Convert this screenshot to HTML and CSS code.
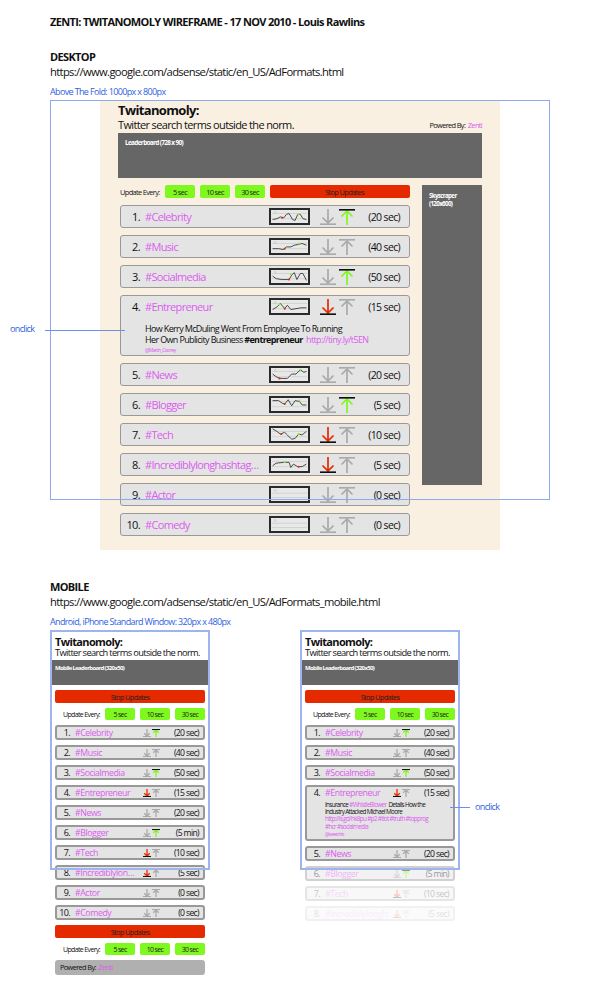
FILE: index.html
```html
<!DOCTYPE html>
<html lang="en">
<head>
  <meta charset="UTF-8">
  <title>Twitanomoly Wireframe</title>
  <link rel="stylesheet" href="styles.css">
</head>
<body>

  <svg class="defs" width="0" height="0">
    <symbol id="down" viewBox="0 0 16 16">
      <path class="shaft" d="M8 0V14M2.5 8.5L8 14L13.5 8.5"/>
      <path class="base" d="M0 15.2H16"/>
    </symbol>
    <symbol id="up" viewBox="0 0 16 16">
      <path class="shaft" d="M8 16V2M2.5 7.5L8 2L13.5 7.5"/>
      <path class="base" d="M0 .8H16"/>
    </symbol>
  </svg>

  <h1 class="doc-title">ZENTI: TWITANOMOLY WIREFRAME - 17 NOV 2010 - Louis Rawlins</h1>

  <h2 class="sec-title">DESKTOP</h2>
  <p class="sec-url">https://www.google.com/adsense/static/en_US/AdFormats.html</p>
  <p class="sec-note">Above The Fold: 1000px x 800px</p>

  <section class="desktop">
    <div class="panel">
      <div class="head">
        <div>
          <div class="brand">Twitanomoly:</div>
          <div class="tagline">Twitter search terms outside the norm.</div>
        </div>
        <div class="powered">Powered By: &nbsp;<span class="pink">Zenti</span></div>
      </div>
      <div class="leaderboard">Leaderboard (728 x 90)</div>

      <div class="columns">
        <div class="main">
          <div class="controls">
            <span class="every">Update Every:</span>
            <span class="pill">5 sec</span>
            <span class="pill">10 sec</span>
            <span class="pill">30 sec</span>
            <span class="stop">Stop Updates</span>
          </div>

          <div class="row">
            <div class="row-top">
              <span class="num">1.</span><span class="tag">#Celebrity</span>
              <svg class="spark" viewBox="1 1 39 15"><path class="grid" d="M0 5H41M0 11H41"/><text class="lbl" x="2" y="6">15</text><path class="line" d="M1 12L6 11L10 9L14 10L17 6L20 5L24 12L27 13L30 6L33 6L36 11L40 12"/><circle class="lo" cx="12" cy="10" r="1.2"/><circle class="hi" cx="31" cy="6" r="1.2"/></svg>
              <svg class="arrow"><use href="#down"/></svg><svg class="arrow green"><use href="#up"/></svg>
              <span class="time">(20 sec)</span>
            </div>
          </div>
          <div class="row">
            <div class="row-top">
              <span class="num">2.</span><span class="tag">#Music</span>
              <svg class="spark" viewBox="1 1 39 15"><path class="grid" d="M0 5H41M0 11H41"/><text class="lbl" x="2" y="6">15</text><path class="line" d="M1 11L8 11L13 12L17 9L22 9L26 7L31 6L35 5L40 7"/><circle class="lo" cx="15" cy="11" r="1.2"/><circle class="hi" cx="32" cy="5" r="1.2"/></svg>
              <svg class="arrow"><use href="#down"/></svg><svg class="arrow"><use href="#up"/></svg>
              <span class="time">(40 sec)</span>
            </div>
          </div>
          <div class="row">
            <div class="row-top">
              <span class="num">3.</span><span class="tag">#Socialmedia</span>
              <svg class="spark" viewBox="1 1 39 15"><path class="grid" d="M0 5H41M0 11H41"/><text class="lbl" x="2" y="6">15</text><path class="line" d="M1 8L5 11L12 12L20 12L23 7L26 4L29 12L33 5L36 5L40 13"/><circle class="lo" cx="20" cy="12" r="1.2"/><circle class="hi" cx="22" cy="6" r="1.2"/></svg>
              <svg class="arrow"><use href="#down"/></svg><svg class="arrow green"><use href="#up"/></svg>
              <span class="time">(50 sec)</span>
            </div>
          </div>
          <div class="row">
            <div class="row-top">
              <span class="num">4.</span><span class="tag">#Entrepreneur</span>
              <svg class="spark" viewBox="1 1 39 15"><path class="grid" d="M0 5H41M0 11H41"/><text class="lbl" x="2" y="6">15</text><path class="line" d="M1 12L6 9L10 5L15 11L18 7L22 12L28 11L34 10L40 10"/><circle class="lo" cx="15" cy="11" r="1.2"/><circle class="hi" cx="9" cy="6" r="1.2"/></svg>
              <svg class="arrow red"><use href="#down"/></svg><svg class="arrow"><use href="#up"/></svg>
              <span class="time">(15 sec)</span>
            </div>
            <div class="detail">
              <p>How Kerry McDuling Went From Employee To Running<br>Her Own Publicity Business <b>#entrepreneur</b> &nbsp;<span class="pink">http://tiny.ly/t5EN</span></p>
              <p class="by pink">@Martin_Cooney</p>
            </div>
          </div>
          <div class="row">
            <div class="row-top">
              <span class="num">5.</span><span class="tag">#News</span>
              <svg class="spark" viewBox="1 1 39 15"><path class="grid" d="M0 5H41M0 11H41"/><text class="lbl" x="2" y="6">15</text><path class="line" d="M1 8L5 11L9 13L18 13L23 8L28 8L33 3L37 6L40 5"/><circle class="lo" cx="9" cy="13" r="1.2"/><circle class="hi" cx="33" cy="3" r="1.2"/></svg>
              <svg class="arrow"><use href="#down"/></svg><svg class="arrow"><use href="#up"/></svg>
              <span class="time">(20 sec)</span>
            </div>
          </div>
          <div class="row">
            <div class="row-top">
              <span class="num">6.</span><span class="tag">#Blogger</span>
              <svg class="spark" viewBox="1 1 39 15"><path class="grid" d="M0 5H41M0 11H41"/><path class="line" d="M1 4L8 4L12 7L15 8L19 3L23 10L27 4L32 5L35 9L40 9"/><circle class="lo" cx="15" cy="8" r="1.2"/><circle class="hi" cx="32" cy="4" r="1.2"/></svg>
              <svg class="arrow"><use href="#down"/></svg><svg class="arrow green"><use href="#up"/></svg>
              <span class="time">(5 sec)</span>
            </div>
          </div>
          <div class="row">
            <div class="row-top">
              <span class="num">7.</span><span class="tag">#Tech</span>
              <svg class="spark" viewBox="1 1 39 15"><path class="grid" d="M0 5H41M0 11H41"/><path class="line" d="M1 2L6 5L10 8L15 6L18 9L23 14L27 13L31 8L35 9L40 5"/><circle class="lo" cx="11" cy="8" r="1.2"/><circle class="hi" cx="31" cy="8" r="1.2"/></svg>
              <svg class="arrow red"><use href="#down"/></svg><svg class="arrow"><use href="#up"/></svg>
              <span class="time">(10 sec)</span>
            </div>
          </div>
          <div class="row">
            <div class="row-top">
              <span class="num">8.</span><span class="tag">#Incrediblylonghashtag…</span>
              <svg class="spark" viewBox="1 1 39 15"><path class="grid" d="M0 5H41M0 11H41"/><path class="line" d="M1 10L5 7L14 6L20 6L22 12L25 8L30 11L35 11L40 8"/><circle class="lo" cx="31" cy="11" r="1.2"/><circle class="hi" cx="15" cy="6" r="1.2"/></svg>
              <svg class="arrow red"><use href="#down"/></svg><svg class="arrow"><use href="#up"/></svg>
              <span class="time">(5 sec)</span>
            </div>
          </div>
          <div class="row">
            <div class="row-top">
              <span class="num">9.</span><span class="tag">#Actor</span>
              <svg class="spark" viewBox="1 1 39 15"><path class="grid" d="M0 7H41M0 12H41"/><text class="lbl" x="2" y="6">15</text></svg>
              <svg class="arrow"><use href="#down"/></svg><svg class="arrow"><use href="#up"/></svg>
              <span class="time">(0 sec)</span>
            </div>
          </div>
          <div class="row">
            <div class="row-top">
              <span class="num">10.</span><span class="tag">#Comedy</span>
              <svg class="spark" viewBox="1 1 39 15"><path class="grid" d="M0 7H41M0 12H41"/><text class="lbl" x="2" y="6">15</text></svg>
              <svg class="arrow"><use href="#down"/></svg><svg class="arrow"><use href="#up"/></svg>
              <span class="time">(0 sec)</span>
            </div>
          </div>
        </div>

        <div class="skyscraper">Skyscraper<br>(120x600)</div>
      </div>
    </div>

    <div class="fold"></div>
    <span class="onclick-label">onclick</span>
    <span class="onclick-line"></span>
  </section>

  <h2 class="sec-title mobile-title">MOBILE</h2>
  <p class="sec-url">https://www.google.com/adsense/static/en_US/AdFormats_mobile.html</p>
  <p class="sec-note">Android, iPhone Standard Window: 320px x 480px</p>

  <section class="phones">
    <div class="phone">
      <div class="m-brand">Twitanomoly:</div>
      <div class="m-tagline">Twitter search terms outside the norm.</div>
      <div class="m-board">Mobile Leaderboard (320x50)</div>
      <div class="m-stop">Stop Updates</div>
      <div class="m-controls">
        <span class="m-every">Update Every:</span>
        <span class="m-pill">5 sec</span><span class="m-pill">10 sec</span><span class="m-pill">30 sec</span>
      </div>

      <div class="m-row"><div class="m-top"><span class="m-num">1.</span><span class="m-tag">#Celebrity</span><svg class="m-arrow"><use href="#down"/></svg><svg class="m-arrow green"><use href="#up"/></svg><span class="m-time">(20 sec)</span></div></div>
      <div class="m-row"><div class="m-top"><span class="m-num">2.</span><span class="m-tag">#Music</span><svg class="m-arrow"><use href="#down"/></svg><svg class="m-arrow"><use href="#up"/></svg><span class="m-time">(40 sec)</span></div></div>
      <div class="m-row"><div class="m-top"><span class="m-num">3.</span><span class="m-tag">#Socialmedia</span><svg class="m-arrow"><use href="#down"/></svg><svg class="m-arrow green"><use href="#up"/></svg><span class="m-time">(50 sec)</span></div></div>
      <div class="m-row"><div class="m-top"><span class="m-num">4.</span><span class="m-tag">#Entrepreneur</span><svg class="m-arrow red"><use href="#down"/></svg><svg class="m-arrow"><use href="#up"/></svg><span class="m-time">(15 sec)</span></div></div>
      <div class="m-row"><div class="m-top"><span class="m-num">5.</span><span class="m-tag">#News</span><svg class="m-arrow"><use href="#down"/></svg><svg class="m-arrow"><use href="#up"/></svg><span class="m-time">(20 sec)</span></div></div>
      <div class="m-row"><div class="m-top"><span class="m-num">6.</span><span class="m-tag">#Blogger</span><svg class="m-arrow"><use href="#down"/></svg><svg class="m-arrow green"><use href="#up"/></svg><span class="m-time">(5 min)</span></div></div>
      <div class="m-row"><div class="m-top"><span class="m-num">7.</span><span class="m-tag">#Tech</span><svg class="m-arrow red"><use href="#down"/></svg><svg class="m-arrow"><use href="#up"/></svg><span class="m-time">(10 sec)</span></div></div>
      <div class="m-row"><div class="m-top"><span class="m-num">8.</span><span class="m-tag">#Incrediblylon…</span><svg class="m-arrow red"><use href="#down"/></svg><svg class="m-arrow"><use href="#up"/></svg><span class="m-time">(5 sec)</span></div></div>
      <div class="m-row"><div class="m-top"><span class="m-num">9.</span><span class="m-tag">#Actor</span><svg class="m-arrow"><use href="#down"/></svg><svg class="m-arrow"><use href="#up"/></svg><span class="m-time">(0 sec)</span></div></div>
      <div class="m-row"><div class="m-top"><span class="m-num">10.</span><span class="m-tag">#Comedy</span><svg class="m-arrow"><use href="#down"/></svg><svg class="m-arrow"><use href="#up"/></svg><span class="m-time">(0 sec)</span></div></div>

      <div class="m-stop">Stop Updates</div>
      <div class="m-controls">
        <span class="m-every">Update Every:</span>
        <span class="m-pill">5 sec</span><span class="m-pill">10 sec</span><span class="m-pill">30 sec</span>
      </div>
      <div class="m-powered">Powered By: &nbsp;<span class="pink">Zenti</span></div>

      <div class="window"></div>
    </div>

    <div class="phone">
      <div class="m-brand">Twitanomoly:</div>
      <div class="m-tagline">Twitter search terms outside the norm.</div>
      <div class="m-board">Mobile Leaderboard (320x50)</div>
      <div class="m-stop">Stop Updates</div>
      <div class="m-controls">
        <span class="m-every">Update Every:</span>
        <span class="m-pill">5 sec</span><span class="m-pill">10 sec</span><span class="m-pill">30 sec</span>
      </div>

      <div class="m-row"><div class="m-top"><span class="m-num">1.</span><span class="m-tag">#Celebrity</span><svg class="m-arrow"><use href="#down"/></svg><svg class="m-arrow green"><use href="#up"/></svg><span class="m-time">(20 sec)</span></div></div>
      <div class="m-row"><div class="m-top"><span class="m-num">2.</span><span class="m-tag">#Music</span><svg class="m-arrow"><use href="#down"/></svg><svg class="m-arrow"><use href="#up"/></svg><span class="m-time">(40 sec)</span></div></div>
      <div class="m-row"><div class="m-top"><span class="m-num">3.</span><span class="m-tag">#Socialmedia</span><svg class="m-arrow"><use href="#down"/></svg><svg class="m-arrow green"><use href="#up"/></svg><span class="m-time">(50 sec)</span></div></div>
      <div class="m-row">
        <div class="m-top"><span class="m-num">4.</span><span class="m-tag">#Entrepreneur</span><svg class="m-arrow red"><use href="#down"/></svg><svg class="m-arrow"><use href="#up"/></svg><span class="m-time">(15 sec)</span></div>
        <div class="m-detail">
          Insurance <span class="pink">#WhistleBlower</span> &nbsp;Details How the<br>Industry Attacked Michael Moore<br>
          <span class="pink">http://is.gd/hk8pu #p2 #tlot #truth #topprog<br>#hcr #socialmedia</span><br>
          <span class="pink m-by">@tweetchris</span>
        </div>
      </div>
      <div class="m-row"><div class="m-top"><span class="m-num">5.</span><span class="m-tag">#News</span><svg class="m-arrow"><use href="#down"/></svg><svg class="m-arrow"><use href="#up"/></svg><span class="m-time">(20 sec)</span></div></div>
      <div class="m-row fade-1"><div class="m-top"><span class="m-num">6.</span><span class="m-tag">#Blogger</span><svg class="m-arrow"><use href="#down"/></svg><svg class="m-arrow green"><use href="#up"/></svg><span class="m-time">(5 min)</span></div></div>
      <div class="m-row fade-2"><div class="m-top"><span class="m-num">7.</span><span class="m-tag">#Tech</span><svg class="m-arrow red"><use href="#down"/></svg><svg class="m-arrow"><use href="#up"/></svg><span class="m-time">(10 sec)</span></div></div>
      <div class="m-row fade-3"><div class="m-top"><span class="m-num">8.</span><span class="m-tag">#Incrediblylongh:</span><svg class="m-arrow red"><use href="#down"/></svg><svg class="m-arrow"><use href="#up"/></svg><span class="m-time">(5 sec)</span></div></div>

      <div class="window"></div>
      <span class="m-click-line"></span>
      <span class="m-click-label">onclick</span>
    </div>
  </section>

</body>
</html>
```

FILE: styles.css
```css
* {
  box-sizing: border-box;
}

body {
  margin: 0;
  background: #fff;
  color: #111;
  font-family: "Open Sans", "Liberation Sans", sans-serif;
  letter-spacing: -0.04em;
}

p {
  margin: 0;
}

.defs {
  position: absolute;
}

.pink {
  color: #dc5cf0;
}

.doc-title {
  margin: 16px 0 0 50px;
  font-size: 11px;
  line-height: 12px;
  font-weight: 700;
}

.sec-title {
  margin: 23px 0 0 50px;
  font-size: 11px;
  line-height: 12px;
  font-weight: 700;
}

.mobile-title {
  margin-top: 31px;
}

.sec-url {
  margin: 2px 0 0 50px;
  font-size: 11.2px;
  line-height: 14px;
}

.sec-note {
  margin: 8px 0 0 50px;
  font-size: 9px;
  line-height: 10px;
  color: #2f5fe0;
}

/* desktop */
.desktop {
  position: relative;
  margin-top: 3px;
}

.panel {
  width: 400px;
  height: 450px;
  margin-left: 100px;
  padding: 3px 18px 0;
  background: #f9f0e2;
}

.head {
  display: flex;
  justify-content: space-between;
  align-items: flex-end;
}

.brand {
  font-size: 13px;
  line-height: 15px;
  font-weight: 700;
}

.tagline {
  font-size: 11px;
  line-height: 13px;
}

.powered {
  font-size: 7.4px;
  line-height: 11px;
}

.leaderboard {
  height: 45px;
  margin-top: 2px;
  padding: 5px 7px;
  background: #666;
  color: #fff;
  font-size: 6.4px;
  line-height: 9px;
  font-weight: 700;
}

.columns {
  display: flex;
  gap: 12px;
  margin-top: 7px;
}

.main {
  width: 290px;
  margin-left: 2px;
  display: flex;
  flex-direction: column;
  gap: 7px;
}

.controls {
  display: flex;
  gap: 5px;
  height: 13px;
  align-items: center;
  font-size: 7.4px;
}

.every {
  width: 40px;
  white-space: nowrap;
}

.pill,
.stop,
.m-pill,
.m-stop {
  display: flex;
  align-items: center;
  justify-content: center;
  border-radius: 2px;
  color: #222;
  white-space: nowrap;
}

.pill {
  width: 30px;
  height: 13px;
  background: #7ff81f;
}

.stop {
  flex: 1;
  height: 13px;
  padding-left: 9px;
  background: #e52a00;
}

.row {
  border: 1px solid #999;
  border-radius: 3px;
  background: #e4e4e4;
}

.row-top {
  display: flex;
  align-items: center;
  height: 21px;
}

.num {
  width: 19px;
  margin-right: 5px;
  text-align: right;
  font-size: 11px;
}

.tag {
  width: 124px;
  font-size: 11px;
  letter-spacing: -0.06em;
  color: #dc5cf0;
  white-space: nowrap;
  overflow: hidden;
}

.spark {
  width: 41px;
  height: 17px;
  border: 2px solid #2a2a2a;
  background: #e8e8e8;
}

.grid {
  fill: none;
  stroke: #cfcfcf;
  stroke-width: 1;
}

.lbl {
  fill: #bbb;
  font-size: 4px;
}

.line {
  fill: none;
  stroke: #444;
  stroke-width: 1.1;
}

.lo {
  fill: #e52a00;
}

.hi {
  fill: #7ff81f;
}

.arrow,
.m-arrow {
  color: #aaa;
  --bar: #aaa;
  --sw: 1.7;
}

.arrow.green,
.m-arrow.green {
  color: #7ff81f;
  --bar: #111;
}

.arrow.red,
.m-arrow.red {
  color: #e52a00;
  --bar: #111;
}

.arrow {
  width: 16px;
  height: 16px;
  margin-left: 3px;
}

.spark + .arrow {
  margin-left: 10px;
}

.shaft {
  fill: none;
  stroke: currentColor;
  stroke-width: var(--sw);
}

.base {
  fill: none;
  stroke: var(--bar);
  stroke-width: var(--sw);
}

.time {
  width: 45px;
  text-align: right;
  font-size: 10.5px;
  white-space: nowrap;
}

.detail {
  padding: 6px 0 1px 24px;
  font-size: 9px;
  line-height: 11px;
}

.by {
  font-size: 5px;
  line-height: 8px;
  margin-top: 1px;
}

.skyscraper {
  width: 60px;
  height: 300px;
  padding: 7px;
  background: #666;
  color: #fff;
  font-size: 6.2px;
  line-height: 8px;
  font-weight: 700;
}

.fold {
  position: absolute;
  top: 0;
  left: 50px;
  width: 500px;
  height: 400px;
  border: 1px solid #8fa9ee;
}

.onclick-label {
  position: absolute;
  top: 223px;
  left: 10px;
  font-size: 9px;
  line-height: 12px;
  color: #2f5fe0;
}

.onclick-line {
  position: absolute;
  top: 230px;
  left: 45px;
  width: 80px;
  height: 1px;
  background: #6f8fe6;
}

/* mobile */
.phones {
  display: flex;
  gap: 90px;
  margin: 3px 0 0 50px;
}

.phone {
  position: relative;
  width: 160px;
}

.m-brand {
  margin: 6px 0 0 5px;
  font-size: 11px;
  line-height: 12px;
  font-weight: 700;
}

.m-tagline {
  margin-left: 5px;
  font-size: 9.3px;
  line-height: 10px;
}

.m-board {
  height: 25px;
  margin-top: 2px;
  padding: 4px 5px;
  background: #666;
  color: #fff;
  font-size: 6px;
  line-height: 8px;
  font-weight: 700;
}

.m-stop {
  height: 13px;
  margin: 5px 5px 0;
  background: #e52a00;
  font-size: 7.4px;
}

.m-controls {
  display: flex;
  gap: 5px;
  align-items: center;
  margin: 5px 5px 0;
  font-size: 7px;
}

.m-every {
  width: 45px;
  text-align: right;
  white-space: nowrap;
}

.m-pill {
  width: 30px;
  height: 12px;
  background: #7ff81f;
}

.m-row {
  margin: 5px 5px 0;
  border: 2px solid #999;
  border-radius: 3px;
  background: #e4e4e4;
}

.m-top {
  display: flex;
  align-items: center;
  height: 11px;
}

.m-num {
  width: 13px;
  margin-right: 5px;
  text-align: right;
  font-size: 9px;
}

.m-tag {
  width: 68px;
  color: #dc5cf0;
  font-size: 8.8px;
  letter-spacing: -0.05em;
  white-space: nowrap;
  overflow: hidden;
}

.m-arrow {
  --sw: 2.6;
  width: 8px;
  height: 8px;
  margin-right: 1px;
}

.m-time {
  width: 38px;
  text-align: right;
  font-size: 8.6px;
  white-space: nowrap;
}

.m-detail {
  padding: 3px 0 1px 18px;
  font-size: 6.3px;
  line-height: 7.2px;
}

.m-by {
  font-size: 4.5px;
}

.m-powered {
  height: 15px;
  margin: 5px 5px 0;
  padding-left: 5px;
  border-radius: 3px;
  background: #b0b0b0;
  font-size: 7.4px;
  line-height: 15px;
}

.fade-1 {
  opacity: 0.45;
}

.fade-2 {
  opacity: 0.25;
}

.fade-3 {
  opacity: 0.13;
}

.window {
  position: absolute;
  top: 0;
  left: 0;
  width: 160px;
  height: 240px;
  border: 2px solid #9db4f0;
}

.m-click-line {
  position: absolute;
  top: 177px;
  left: 150px;
  width: 20px;
  height: 1px;
  background: #6f8fe6;
}

.m-click-label {
  position: absolute;
  top: 171px;
  left: 175px;
  font-size: 9px;
  line-height: 12px;
  color: #2f5fe0;
}
```
